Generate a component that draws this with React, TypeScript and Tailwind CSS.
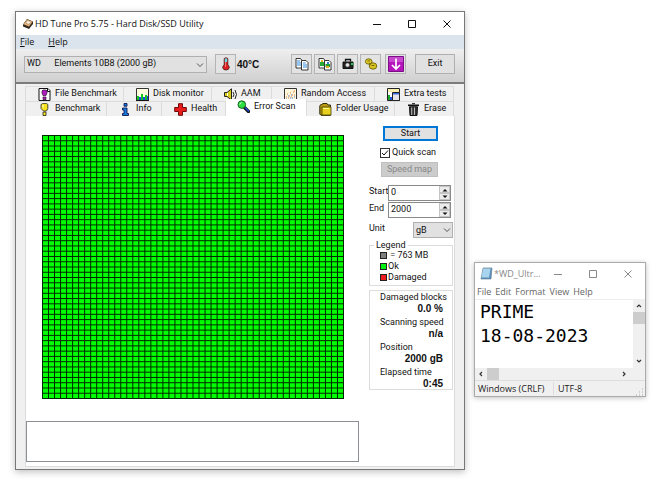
import React from "react";

const ui = "font-[Roboto,'Liberation_Sans',sans-serif]";
const uiBold = "font-['Liberation_Sans',Arial,sans-serif] font-bold";
const segoe = "font-['Open_Sans','Noto_Sans',sans-serif]";

function Bulb({ c = "#f4e21c" }: { c?: string }) {
  return (
    <svg viewBox="0 0 13 13" className="size-[13px] shrink-0">
      <path d="M3.500 1l1-.6h4l1.300 1v4.200L8.500 8h-3L3 5.500V2z" fill={c} stroke="#222" strokeWidth=".8" />
      <path d="M5 2v2.500" stroke="#fff" />
      <path d="M5 9h3v3.500H5z" fill={c} stroke="#222" strokeWidth=".8" />
    </svg>
  );
}

function FileBulb() {
  return (
    <svg viewBox="0 0 13 13" className="size-[13px] shrink-0">
      <path d="M1 .5h9l2 2v10H1z" fill="#fff" stroke="#111" />
      <path d="M9.500.5v3H12" fill="none" stroke="#111" />
      <path d="M5 2h3l1 1v2L8 7.500H5L4 5V3zM5 9h3v2.500H5z" fill="#b01cc0" stroke="#301030" strokeWidth=".7" />
    </svg>
  );
}

function Bars() {
  return (
    <svg viewBox="0 0 13 13" className="size-[13px] shrink-0">
      <path d="M.5.5h12v12H.5z" fill="#ffffe0" stroke="#333" />
      <path d="M1 12V8h2v4M5 12V6h2v6M9 12V7h2v5" fill="#14c81c" />
      <path d="M3 12V9h2v3M7 12V9h2v3M11 12V8h1v4" fill="#1846e8" />
      <path d="M0 12.500h13" stroke="#111" />
    </svg>
  );
}

function Speaker() {
  return (
    <svg viewBox="0 0 13 13" className="size-[13px] shrink-0">
      <path d="M.5 4.500H3L7.500.8v11.400L3 8.500H.5z" fill="#d8c91c" stroke="#222" />
      <path d="M3.500 5v3" stroke="#fff" />
      <path d="M9 4q2 2.500 0 5M11 2q3 4.500 0 9" fill="none" stroke="#222" />
    </svg>
  );
}

function Scatter() {
  return (
    <svg viewBox="0 0 13 13" className="size-[13px] shrink-0">
      <path d="M.5.5h12v12H.5z" fill="#fff7dc" stroke="#333" />
      <path d="M2 9h1M3 6h1M5 8h1M6 5h1M8 7h1M9 4h1M10 3h1M4 10h1M7 9h1M10 7h1" stroke="#e0783c" />
      <path d="M2 11h1M4 8h1M6 10h1M8 10h1M10 9h1M7 7h1" stroke="#4c7ce0" />
    </svg>
  );
}

function Extra() {
  return (
    <svg viewBox="0 0 13 13" className="size-[13px] shrink-0">
      <path d="M.5.5h12v12H.5z" fill="#fff" stroke="#222" />
      <path d="M1 1h11v3H1z" fill="#f8f0b0" />
      <path d="M1 12V7h2v5" fill="#18a828" />
      <path d="M3 12V9h2v3" fill="#2850e0" />
      <path d="M5.500 4.500h7v8h-7z" fill="#e4e4ec" stroke="#222" />
      <path d="M6 5h6v1.500H6z" fill="#3868e0" />
    </svg>
  );
}

function Info() {
  return (
    <svg viewBox="0 0 13 13" className="size-[13px] shrink-0">
      <path d="M5 .5h3v2.700H5zM3.500 5H8v5.500h1.500v2h-6v-2H5V7H3.500z" fill="#1878e0" stroke="#101850" strokeWidth=".9" />
    </svg>
  );
}

function Cross() {
  return (
    <svg viewBox="0 0 13 13" className="size-[13px] shrink-0">
      <path d="M4.500.7h4v3.800h3.800v4H8.500v3.800h-4V8.500H.7v-4h3.800z" fill="#e81c1c" stroke="#700808" />
    </svg>
  );
}

function Lens() {
  return (
    <svg viewBox="0 0 13 13" className="size-[13px] shrink-0">
      <path d="M7.500 7.500l4 4" stroke="#111" strokeWidth="3.200" strokeLinecap="round" />
      <path d="M8 7.500l3.500 3.500" stroke="#2048d0" strokeWidth="1.500" strokeLinecap="round" />
      <circle cx="4.800" cy="4.600" r="3.800" fill="#2ce040" stroke="#186020" />
      <path d="M2.700 4.600q.4-1.800 2-2" fill="none" stroke="#d8ffd8" />
    </svg>
  );
}

function Folder() {
  return (
    <svg viewBox="0 0 13 13" className="size-[13px] shrink-0">
      <path d="M.8 3l1-1.500h1L4 .5h4l1 1.500h2.500v10.300H2L.8 11z" fill="#b89810" stroke="#332c08" />
      <path d="M3 4h9v8H3z" fill="#e8d020" stroke="#443c08" strokeWidth=".8" />
      <path d="M4 5.500h6" stroke="#fff590" />
    </svg>
  );
}

function Bin() {
  return (
    <svg viewBox="0 0 13 13" className="size-[13px] shrink-0">
      <path d="M5 .7h3" stroke="#111" />
      <path d="M1 2.300h11" stroke="#111" strokeWidth="1.600" />
      <path d="M2.500 3.800h8L10 12.500H3z" fill="#333" stroke="#111" />
      <path d="M4.700 4.500v7.500M7.500 4.500v7.500" stroke="#ccc" strokeWidth=".9" />
    </svg>
  );
}

function DriveLogo() {
  return (
    <svg viewBox="0 0 12 12" className="size-3 shrink-0">
      <path d="M1 6.500L5 1l6 2.500v2.500L7 11 1 8.500z" fill="#33281f" />
      <path d="M1.500 6.300L5 1.500l5.500 2.200L7 8.500z" fill="#e6b47a" />
      <ellipse cx="6.300" cy="4.400" rx="2.300" ry="1.700" fill="#fff3dd" stroke="#8a6845" strokeWidth=".5" />
    </svg>
  );
}

function Thermometer() {
  return (
    <svg viewBox="0 0 10 14" className="h-3.5 w-2.5">
      <path d="M3.200 1.500q1.800-1.500 3.600 0V8q1.700 1 1.500 2.700-.5 2.300-3.300 2.300t-3.300-2.300Q1.500 9 3.200 8z" fill="#e02020" stroke="#401414" strokeWidth=".8" />
      <path d="M3.800 1.500h2.400v3.500H3.800z" fill="#68dce0" />
      <path d="M4.500 5v5" stroke="#ff9a9a" strokeWidth=".7" />
    </svg>
  );
}

function Pages({ photo = false }: { photo?: boolean }) {
  return (
    <svg viewBox="0 0 14 14" className="size-3.5">
      <path d="M1 1.500h4.500l1.500 2V11H1z" fill="#fff" stroke="#222" strokeWidth=".9" />
      <path d="M6.500 3.500H11l2 2v7.500H6.500z" fill="#fff" stroke="#222" strokeWidth=".9" />
      {photo ? (
        <>
          <path d="M2 5h4v4H2z" fill="#28a838" />
          <path d="M7.500 7h4.500v3H7.500z" fill="#20a030" />
          <path d="M3 3h2v2H3zM8 9h3v2H8z" fill="#e0b020" />
          <path d="M9 5h2v2H9z" fill="#3078d8" />
        </>
      ) : (
        <path d="M2 4h3M2 6h4M2 8h4M8 6h2.500M8 8h4M8 10h4" stroke="#3088e0" strokeWidth="1.200" />
      )}
    </svg>
  );
}

function Camera() {
  return (
    <svg viewBox="0 0 14 14" className="size-3.5">
      <path d="M4.500 4.500V2.500h5v2" fill="none" stroke="#111" strokeWidth="1.300" />
      <path d="M2 5h10v6.500H2z" fill="#222" stroke="#111" />
      <circle cx="6.500" cy="8" r="1.900" fill="#eee" stroke="#777" strokeWidth=".7" />
      <path d="M10 6h2v2h-2z" fill="#20c840" />
    </svg>
  );
}

function Gears() {
  return (
    <svg viewBox="0 0 14 14" className="size-3.5">
      <ellipse cx="4.700" cy="4.500" rx="3.300" ry="2.700" fill="#e0cc24" stroke="#6b600c" strokeWidth=".9" />
      <ellipse cx="9" cy="9" rx="3.800" ry="3.200" fill="#d8c420" stroke="#6b600c" strokeWidth=".9" />
      <path d="M3.500 4h2.500M7.500 8.500h3M5 6l1.500 2" stroke="#776b10" strokeWidth="1.200" />
    </svg>
  );
}

function Down() {
  return (
    <svg viewBox="0 0 16 16" className="size-4">
      <path d="M.5.500h15v15H.5z" fill="#b515bd" stroke="#7a1083" />
      <path d="M1 1h14v5H1z" fill="#c847cf" />
      <path d="M8 2.500v10M4 9l4 4 4-4" fill="none" stroke="#fff" strokeWidth="1.700" />
    </svg>
  );
}

function Chevron({ className = "" }: { className?: string }) {
  return (
    <svg viewBox="0 0 8 8" className={`pointer-events-none size-2 ${className}`}>
      <path d="M1 2.500l3 3 3-3" fill="none" stroke="#444" strokeWidth=".9" />
    </svg>
  );
}

function ScrollArrow({ className = "" }: { className?: string }) {
  return (
    <svg viewBox="0 0 8 8" className={`size-2 ${className}`}>
      <path d="M2 3l2 2 2-2" fill="none" stroke="#333" strokeWidth="1.200" />
    </svg>
  );
}

function WindowButtons({ className }: { className: string }) {
  return (
    <div className={`flex ${className}`}>
      <button aria-label="Minimize" className="flex flex-1 items-center justify-center">
        <svg viewBox="0 0 8 8" className="size-2"><path d="M0 4.500h8" stroke="currentColor" /></svg>
      </button>
      <button aria-label="Maximize" className="flex flex-1 items-center justify-center">
        <svg viewBox="0 0 8 8" className="size-2"><path d="M.5.5h7v7h-7z" fill="none" stroke="currentColor" /></svg>
      </button>
      <button aria-label="Close" className="flex flex-1 items-center justify-center">
        <svg viewBox="0 0 8 8" className="size-2"><path d="M.5.5l7 7M7.500.5l-7 7" stroke="currentColor" /></svg>
      </button>
    </div>
  );
}

type TabProps = { icon: React.ReactNode; label: string; width: string; selected?: boolean };

function Tab({ icon, label, width, selected = false }: TabProps) {
  return (
    <button
      role="tab"
      aria-selected={selected}
      className={`flex items-center whitespace-nowrap border-r border-[#dcdcdc] ${width} ${
        selected ? "-mt-0.5 h-[17px] gap-1 bg-white pb-0.5 pl-[11px]" : "h-[15px] gap-1 border-t pl-3"
      }`}
    >
      {icon}
      {label}
    </button>
  );
}

function ToolButton({ label, children }: { label: string; children: React.ReactNode }) {
  return (
    <button aria-label={label} className="flex h-5 w-[21px] shrink-0 items-center justify-center border border-[#b4b4b4] bg-[#e3e3e3]">
      {children}
    </button>
  );
}

function BlockMap() {
  const lines = Array.from({ length: 51 }, (_, i) => i);
  return (
    <svg viewBox="0 0 302 264" preserveAspectRatio="none" className="h-[264px] w-full" role="img" aria-label="Scanned blocks">
      <rect width="302" height="264" fill="#00ff00" />
      {lines.map((i) => (
        <path key={i} d={`M${0.5 + i * 6.02} 0V264M0 ${0.5 + i * 5.26}H302`} stroke="#002800" strokeWidth="1" />
      ))}
    </svg>
  );
}

function Spin({ id, label, value }: { id: string; label: string; value: string }) {
  return (
    <div className="flex h-4 items-center">
      <label htmlFor={id} className="w-[19px] shrink-0 whitespace-nowrap pb-0.5">{label}</label>
      <div className="flex h-4 w-[63px] border border-[#8a8a8a] bg-white">
        <input id={id} defaultValue={value} className="w-0 flex-1 pl-0.5 outline-none" />
        <div className="flex w-[11px] flex-col">
          <button aria-label={`${label} up`} className="flex flex-1 items-center justify-center border border-[#c4c4c4] bg-[#ececec]">
            <svg viewBox="0 0 6 4" className="h-1 w-1.5"><path d="M.5 3.500l2.500-2.500 2.500 2.500z" fill="#111" /></svg>
          </button>
          <button aria-label={`${label} down`} className="flex flex-1 items-center justify-center border border-[#c4c4c4] bg-[#ececec]">
            <svg viewBox="0 0 6 4" className="h-1 w-1.5"><path d="M.5.5L3 3 5.500.5z" fill="#111" /></svg>
          </button>
        </div>
      </div>
    </div>
  );
}

function LegendRow({ color, text }: { color: string; text: string }) {
  return (
    <div className="flex h-[11px] items-center gap-px pl-2.5">
      <span className={`size-[7px] border border-[#222] ${color}`} />
      <span className="whitespace-pre">{text}</span>
    </div>
  );
}

function Stat({ label, value }: { label: string; value: string }) {
  return (
    <div className="h-[25px]">
      <div className="h-3 leading-3">{label}</div>
      <div className={`h-3 pr-[9px] text-right text-[10px] leading-3 ${uiBold}`}>{value}</div>
    </div>
  );
}

function HdTune() {
  return (
    <section className={`flex min-w-0 flex-1 flex-col border border-[#777] bg-[#f0f0f0] text-[9px] text-[#111] shadow-[0_2px_7px_rgba(0,0,0,0.25)] ${ui}`}>
      <header className="flex h-[23px] items-center bg-white pl-1.5">
        <DriveLogo />
        <h1 className={`ml-px flex-1 whitespace-nowrap ${segoe}`}>HD Tune Pro 5.75 - Hard Disk/SSD Utility</h1>
        <WindowButtons className="h-full w-[104px]" />
      </header>
      <nav className={`flex h-[14px] items-center gap-3.5 bg-[#dbe3ec] pl-1 ${segoe}`}>
        <button><u>F</u>ile</button>
        <button><u>H</u>elp</button>
      </nav>
      <div className="flex h-[35px] items-center border-b-2 border-[#7b7b7b] bg-linear-to-b from-[#efefef] to-[#cfcfcf] pb-[3px] pl-2 pr-[9px]">
        <div className="relative mr-2 h-[17px] w-[183px]">
          <select aria-label="Drive" className="h-full w-full appearance-none whitespace-pre border border-[#b0b0b0] bg-[#e1e1e1] pl-0.5">
            <option>{"WD\u00a0\u00a0\u00a0\u00a0\u00a0\u00a0Elements 10B8 (2000 gB)"}</option>
          </select>
          <Chevron className="absolute right-[3px] top-[5px]" />
        </div>
        <ToolButton label="Temperature"><Thermometer /></ToolButton>
        <span className={`ml-px flex-1 whitespace-nowrap text-[10px] ${uiBold}`}>40°C</span>
        <div className="flex gap-0.5">
          <ToolButton label="Copy text"><Pages /></ToolButton>
          <ToolButton label="Copy image"><Pages photo /></ToolButton>
          <ToolButton label="Screenshot"><Camera /></ToolButton>
          <ToolButton label="Options"><Gears /></ToolButton>
        </div>
        <div className="ml-1 flex"><ToolButton label="Minimize to tray"><Down /></ToolButton></div>
        <button className="ml-[9px] h-5 w-10 border border-[#b0b0b0] bg-[#e1e1e1]">Exit</button>
      </div>
      <div className="flex flex-1 flex-col px-[9px] pb-0.5 pt-0.5">
        <div role="tablist" className="mr-px">
          <div className="flex">
            <Tab icon={<FileBulb />} label="File Benchmark" width="w-[99px] border-l" />
            <Tab icon={<Bars />} label="Disk monitor" width="w-[88px]" />
            <Tab icon={<Speaker />} label="AAM" width="w-[60px]" />
            <Tab icon={<Scatter />} label="Random Access" width="w-[103px]" />
            <Tab icon={<Extra />} label="Extra tests" width="flex-1" />
          </div>
          <div className="flex">
            <Tab icon={<Bulb />} label="Benchmark" width="w-[82px] border-l" />
            <Tab icon={<Info />} label="Info" width="w-[55px]" />
            <Tab icon={<Cross />} label="Health" width="w-[64px]" />
            <Tab icon={<Lens />} label="Error Scan" width="w-[81px]" selected />
            <Tab icon={<Folder />} label="Folder Usage" width="w-[88px]" />
            <Tab icon={<Bin />} label="Erase" width="flex-1" />
          </div>
        </div>
        <main className="flex flex-1 gap-2.5 border-x border-b border-[#dcdcdc] bg-white pb-1 pr-px">
          <div className="flex flex-1 flex-col gap-[22px] pt-[19px]">
            <div className="pl-4 pr-[15px]"><BlockMap /></div>
            <textarea aria-label="Log" readOnly className="h-[41px] w-full resize-none border border-[#8c8f94] bg-white outline-none" />
          </div>
          <aside className="w-[84px] pt-2.5">
            <button className="ml-[14px] block h-[15px] w-[55px] border-2 border-[#0078d7] bg-[#e1e1e1] leading-[11px]">Start</button>
            <label className="ml-[11px] mt-[5px] flex h-[13px] items-center gap-0.5 whitespace-nowrap">
              <input
                type="checkbox"
                defaultChecked
                className="peer size-2.5 shrink-0 appearance-none border border-[#333] bg-white"
              />
              <svg viewBox="0 0 10 10" className="-ml-3 size-2.5 shrink-0 opacity-0 peer-checked:opacity-100">
                <path d="M2 5l2 2 4-4.500" fill="none" stroke="#111" />
              </svg>
              Quick scan
            </label>
            <button disabled className="ml-3 mt-[3px] block h-[15px] w-[57px] border border-[#bfbfbf] bg-[#cccccc] leading-[13px] text-[#888]">Speed map</button>
            <div className="mt-2 flex flex-col gap-px">
              <Spin id="start" label="Start" value="0" />
              <Spin id="end" label="End" value="2000" />
            </div>
            <div className="mt-1 flex h-4 justify-between leading-[13px]">
              <label htmlFor="unit">Unit</label>
              <div className="relative w-10">
                <select id="unit" className="h-4 w-full appearance-none border border-[#b0b0b0] bg-[#e1e1e1] pl-0.5">
                  <option>gB</option>
                </select>
                <Chevron className="absolute right-0.5 top-1" />
              </div>
            </div>
            <fieldset className="mt-0.5 h-[46px] border border-[#dcdcdc]">
              <legend className="ml-1 h-2.5 px-0.5 leading-[10px]">Legend</legend>
              <LegendRow color="bg-[#808080]" text=" = 763 MB" />
              <LegendRow color="bg-[#00f010]" text="Ok" />
              <LegendRow color="bg-[#ee1c1c]" text="Damaged" />
            </fieldset>
            <div className="mt-1 h-[100px] whitespace-nowrap border border-[#dcdcdc] pl-2.5">
              <Stat label="Damaged blocks" value="0.0 %" />
              <Stat label="Scanning speed" value="n/a" />
              <Stat label="Position" value="2000 gB" />
              <Stat label="Elapsed time" value="0:45" />
            </div>
          </aside>
        </main>
      </div>
    </section>
  );
}

function Notepad() {
  return (
    <section className={`mt-[251px] w-[172px] shrink-0 self-start border border-[#aaa] bg-[#f0f0f0] text-[9px] shadow-[0_1px_5px_rgba(0,0,0,0.25)] ${segoe}`}>
      <header className="flex h-[21px] items-center bg-white pl-[5px] text-[#888]">
        <svg viewBox="0 0 13 13" className="size-[13px] shrink-0">
          <path d="M3 1h9l-1 11H1z" fill="#5d8fb8" stroke="#557890" strokeWidth=".6" />
          <path d="M3 1.500h7.500L9 10.500H1.500z" fill="#a8d4ee" />
          <path d="M3.500 1h8" stroke="#bbb" strokeDasharray="1 1" />
        </svg>
        <h2 className="ml-px flex-1 whitespace-nowrap">*WD_Ultr...</h2>
        <WindowButtons className="h-full w-[104px]" />
      </header>
      <nav className="flex h-[15px] items-center gap-1 bg-white pl-0.5 text-[#666]">
        <button>File</button>
        <button>Edit</button>
        <button>Format</button>
        <button>View</button>
        <button>Help</button>
      </nav>
      <div className="flex h-[69px]">
        <textarea
          aria-label="Text"
          defaultValue={"PRIME\n18-08-2023"}
          className="min-w-0 flex-1 resize-none overflow-hidden border-t border-[#eee] bg-white pl-[5px] font-['DejaVu_Sans_Mono',monospace] text-[18px] leading-6 text-black outline-none"
        />
        <div className="flex w-3 flex-col items-center pb-[3px] pt-[3px]">
          <ScrollArrow className="rotate-180" />
          <div className="mt-0.5 h-3 w-full bg-[#cdcdcd]" />
          <ScrollArrow className="mt-auto" />
        </div>
      </div>
      <div className="flex h-3 items-center pl-0.5 pr-[17px]">
        <ScrollArrow className="rotate-90" />
        <div className="ml-0.5 h-full w-3 bg-[#cdcdcd]" />
        <ScrollArrow className="ml-auto -rotate-90" />
      </div>
      <footer className="flex h-4 items-center border-t border-[#ddd] pl-[3px] text-[#222]">
        <span className="w-[76px] whitespace-nowrap border-r border-[#ddd]">Windows (CRLF)</span>
        <span className="flex-1 pl-1">UTF-8</span>
        <svg viewBox="0 0 8 8" className="mr-px size-2 self-end">
          <path d="M6 1h1M3 4h1M6 4h1M0 7h1M3 7h1M6 7h1" stroke="#aaa" />
        </svg>
      </footer>
    </section>
  );
}

export default function App() {
  return (
    <div className="flex min-h-screen items-start gap-[9px] bg-white pb-[31px] pl-[15px] pr-[17px] pt-[11px]">
      <HdTune />
      <Notepad />
    </div>
  );
}
